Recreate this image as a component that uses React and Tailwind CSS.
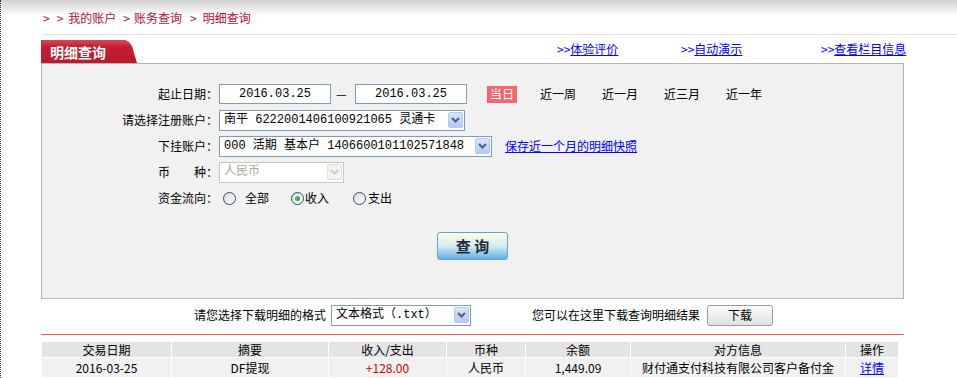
import React from "react";

const COLS = [
  { key: "date", label: "交易日期" },
  { key: "memo", label: "摘要" },
  { key: "amount", label: "收入/支出" },
  { key: "cur", label: "币种" },
  { key: "bal", label: "余额" },
  { key: "party", label: "对方信息" },
  { key: "op", label: "操作" },
];

const ROW = {
  date: "2016-03-25",
  memo: "DF提现",
  amount: "+128.00",
  cur: "人民币",
  bal: "1,449.09",
  party: "财付通支付科技有限公司客户备付金",
};

function Arrow({ disabled }) {
  return (
    <span
      className={`flex h-[16px] w-[15px] shrink-0 items-center justify-center rounded-[2px] border ${
        disabled
          ? "border-[#e2e1da] bg-[#f3f3ef]"
          : "border-[#b5c9f2] bg-gradient-to-b from-[#dae5fd] to-[#b3c9f4]"
      }`}
    >
      <svg width="9" height="6" viewBox="0 0 9 6">
        <path
          d="M1 1 L4.5 4.5 L8 1"
          fill="none"
          stroke={disabled ? "#cfcdc2" : "#4d6185"}
          strokeWidth="2"
        />
      </svg>
    </span>
  );
}

function Select({ width, children, disabled }) {
  return (
    <div
      className={`flex h-[21px] items-center border pl-[4px] pr-[1px] ${width} ${
        disabled ? "border-[#c9c7ba] bg-white" : "border-[#7f9db9] bg-white"
      }`}
    >
      <span
        className={`flex-1 truncate whitespace-pre font-['Liberation_Mono','Noto_Sans_CJK_SC',monospace] text-[12px] leading-[19px] ${
          disabled ? "text-[#aca899]" : "text-black"
        }`}
      >
        {children}
      </span>
      <Arrow disabled={disabled} />
    </div>
  );
}

function DateInput({ value }) {
  return (
    <div className="flex h-[20px] w-[112px] items-center justify-center border border-[#7f9db9] bg-white font-['Liberation_Mono',monospace] text-[12px] text-black">
      {value}
    </div>
  );
}

function Radio({ checked }) {
  return (
    <span className="flex h-[13px] w-[13px] items-center justify-center rounded-full border border-[#1c5180] bg-gradient-to-br from-[#dcdcd5] to-white">
      {checked && (
        <span className="h-[5px] w-[5px] rounded-full bg-gradient-to-br from-[#5fd35f] to-[#1e9a1e]" />
      )}
    </span>
  );
}

function Label({ children }) {
  return <span className="w-[177px] shrink-0 pr-[1px] text-right">{children}</span>;
}

export default function App() {
  return (
    <div className="h-[378px] w-[957px] overflow-hidden border-l border-dotted border-[#333] bg-[linear-gradient(to_bottom,#d2d2d2,#ffffff_16px)] font-['Noto_Sans_CJK_SC','Liberation_Sans',sans-serif] text-[12px] leading-[14px] text-black">
      <div className="pl-[40px]">
        {/* breadcrumb */}
        <div className="ml-[2px] flex h-[35px] border-b border-[#e3e3e3] pt-[11px] text-[#b0102f]">
          <span>&gt;</span>
          <span className="ml-[7px]">&gt;</span>
          <span className="ml-[5px]">我的账户</span>
          <span className="ml-[7px]">&gt;</span>
          <span className="ml-[4px]">账务查询</span>
          <span className="ml-[8px]">&gt;</span>
          <span className="ml-[6px]">明细查询</span>
        </div>

        {/* tab + links */}
        <div className="flex h-[28px] items-center">
          <div className="flex h-[23px] w-[96px] shrink-0 self-end items-center bg-gradient-to-b from-[#d2495a] via-[#c21d31] via-30% to-[#bd1a2d] pl-[9px] text-[14px] font-bold text-white [clip-path:polygon(0_0,84px_0,88px_2px,91px_6px,93px_13px,96px_23px,0_23px)]">
            明细查询
          </div>
          <div className="ml-[420px] w-[124px] text-[#0000ff]">
            &gt;&gt;<span className="underline">体验评价</span>
          </div>
          <div className="w-[140px] text-[#0000ff]">
            &gt;&gt;<span className="underline">自动演示</span>
          </div>
          <div className="text-[#0000ff]">
            &gt;&gt;<span className="underline">查看栏目信息</span>
          </div>
        </div>

        {/* query panel */}
        <div className="h-[236px] w-[863px] border border-[#b4b4b4] bg-[#f1f1f1] pt-[17px]">
          <div className="flex h-[26px] items-center">
            <Label>起止日期：</Label>
            <DateInput value="2016.03.25" />
            <span className="ml-[5px] mr-[7px] w-[12px]">—</span>
            <DateInput value="2016.03.25" />
            <span className="ml-[20px] flex h-[17px] w-[30px] items-center justify-center bg-[#f5676c] text-white">
              当日
            </span>
            <span className="ml-[23px] w-[36px]">近一周</span>
            <span className="ml-[26px] w-[36px]">近一月</span>
            <span className="ml-[26px] w-[36px]">近三月</span>
            <span className="ml-[26px] w-[36px]">近一年</span>
          </div>
          <div className="flex h-[26px] items-center">
            <Label>请选择注册账户：</Label>
            <Select width="w-[246px]">南平 6222001406100921065 灵通卡</Select>
          </div>
          <div className="flex h-[26px] items-center">
            <Label>下挂账户：</Label>
            <Select width="w-[273px]">000 活期 基本户 1406600101102571848</Select>
            <span className="ml-[13px] text-[#0000ff] underline">保存近一个月的明细快照</span>
          </div>
          <div className="flex h-[26px] items-center">
            <Label>币　　种：</Label>
            <Select width="w-[125px]" disabled>
              人民币
            </Select>
          </div>
          <div className="flex h-[26px] items-center">
            <Label>资金流向：</Label>
            <span className="ml-[4px]">
              <Radio />
            </span>
            <span className="ml-[9px]">全部</span>
            <span className="ml-[22px]">
              <Radio checked />
            </span>
            <span className="ml-[1px]">收入</span>
            <span className="ml-[24px]">
              <Radio />
            </span>
            <span className="ml-[2px]">支出</span>
          </div>
          <div className="mt-[21px] flex justify-center">
            <button className="h-[28px] w-[71px] rounded-[3px] border border-[#5aa8d8] bg-gradient-to-b from-[#fdfde2] via-[#d6ecf3] to-[#5fb0e3] text-[15px] font-bold text-[#1b2a36]">
              查 询
            </button>
          </div>
        </div>

        {/* download row */}
        <div className="flex h-[35px] w-[863px] items-center pb-[3px] pl-[153px]">
          <span>请您选择下载明细的格式</span>
          <div className="ml-[5px]">
            <Select width="w-[140px]">文本格式（.txt）</Select>
          </div>
          <span className="ml-[61px]">您可以在这里下载查询明细结果</span>
          <button className="ml-[7px] h-[21px] w-[66px] rounded-[3px] border border-[#9c9c9c] bg-gradient-to-b from-[#fbfbfb] to-[#e1e1e1] text-[12px]">
            下载
          </button>
        </div>
        <div className="h-[1px] w-[863px] bg-[#f05a5a]" />

        {/* result table */}
        <div className="ml-[1px] mt-[7px] grid grid-cols-[129px_156px_117px_78px_104px_214px_52px] gap-[1px] bg-white">
          {COLS.map((c) => (
            <div key={c.key} className="h-[15px] bg-[#e4e4e4] text-center leading-[15px]">
              {c.label}
            </div>
          ))}
          {COLS.map((c) => (
            <div
              key={c.key}
              className={`h-[19px] bg-[#f1f1f1] text-center leading-[19px] ${
                c.key === "amount" ? "text-[#d40000]" : ""
              }`}
            >
              {c.key === "op" ? (
                <span className="text-[#0000ff] underline">详情</span>
              ) : (
                ROW[c.key]
              )}
            </div>
          ))}
          {COLS.map((c) => (
            <div key={c.key} className="h-[19px] bg-[#f1f1f1]" />
          ))}
        </div>
      </div>
    </div>
  );
}
